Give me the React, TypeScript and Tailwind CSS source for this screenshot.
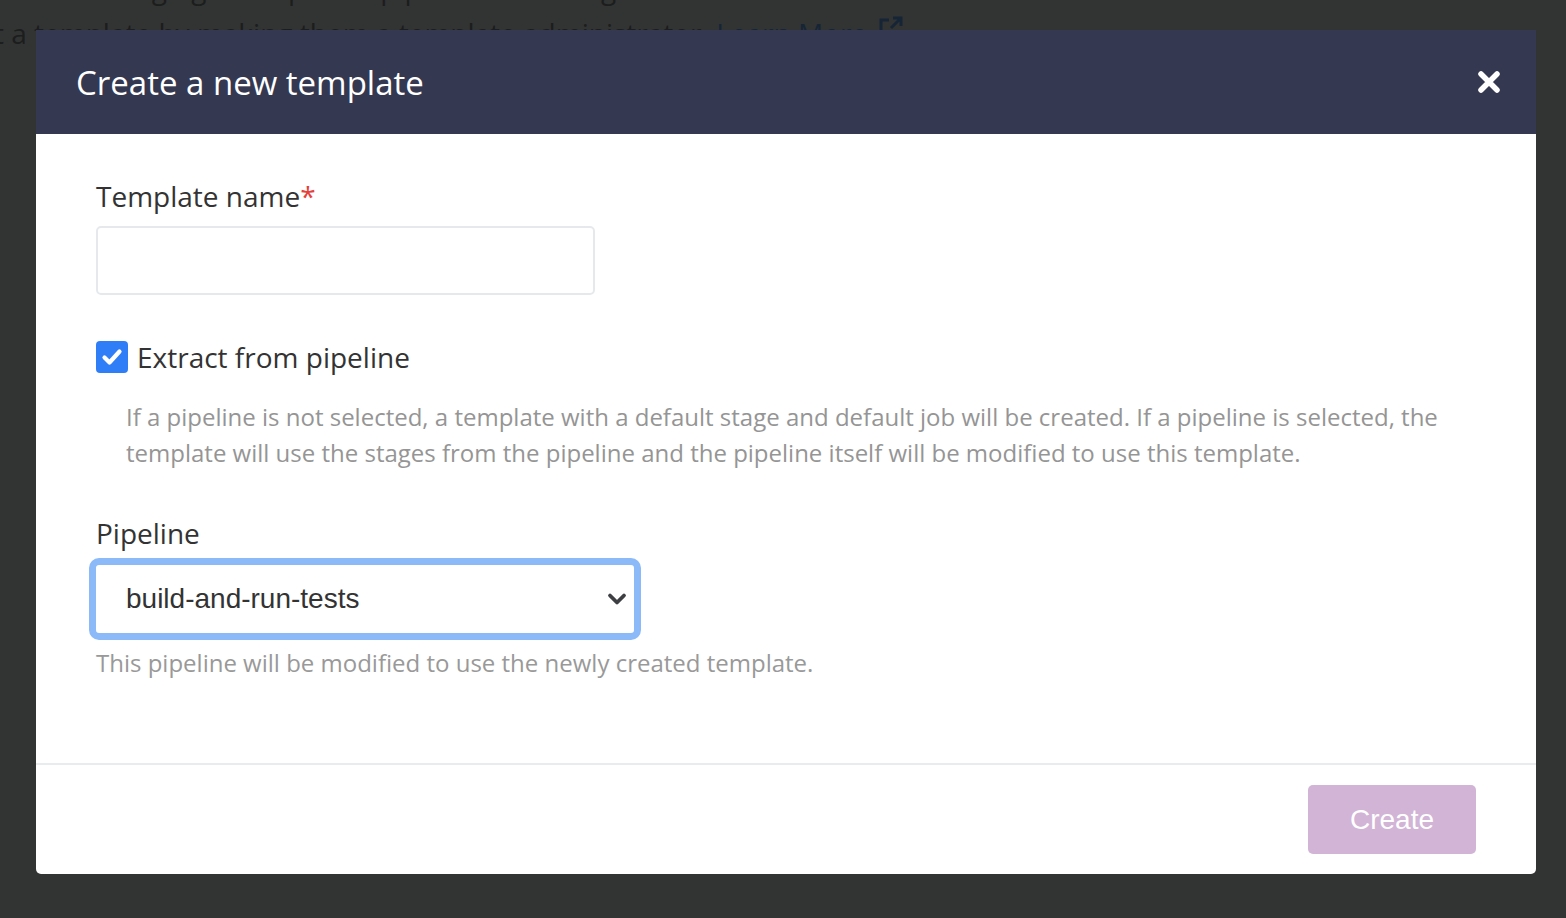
import React from "react";

export default function App() {
  return (
    <div
      className="relative h-[918px] w-[1566px] overflow-hidden bg-[#323433]"
      style={{ fontFamily: '"Open Sans", "Noto Sans", sans-serif' }}
    >
      {/* dimmed page content behind the overlay */}
      <div className="text-[28px] leading-[42px] text-[#1c1d1d]">
        <div className="-mt-[33px] whitespace-nowrap pl-[2px]">
          allow managing a template's pipelines and stages
        </div>
        <div className="mt-[3px] -ml-[6px] flex items-center whitespace-nowrap">
          <span>t a template by making them a template administrator.&nbsp;</span>
          <span className="text-[#152536]">Learn More</span>
          <svg width="28" height="28" viewBox="0 0 28 28" className="ml-[10px] -mt-[10px]">
            <path d="M12 6 H4 V24 H22 V16" fill="none" stroke="#152536" strokeWidth="3" />
            <path d="M14 14 L24 4 M16 4 H24 V12" fill="none" stroke="#152536" strokeWidth="3" />
          </svg>
        </div>
      </div>

      {/* modal */}
      <div className="absolute left-[36px] top-[30px] flex h-[844px] w-[1500px] flex-col overflow-hidden rounded-b-[5px] bg-white">
        <div className="flex h-[104px] shrink-0 items-center justify-between bg-[#343850] pl-[40px] pr-[35px]">
          <h1 className="text-[33px] font-normal leading-none text-white">Create a new template</h1>
          <svg width="24" height="24" viewBox="0 0 24 24" className="block">
            <path d="M4 4 L20 20 M20 4 L4 20" stroke="white" strokeWidth="5.5" strokeLinecap="round" />
          </svg>
        </div>

        <div className="flex-1 px-[60px] pt-[41px]">
          <label className="block text-[28px] leading-[42px] text-[#333]">
            Template name<span className="text-[#e5403a]">*</span>
          </label>
          <div className="mt-[9px] h-[69px] w-[499px] rounded-[5px] border-2 border-[#e6e9ec] bg-white" />

          <div className="mt-[41px] flex h-[42px] items-center">
            <div className="flex h-[32px] w-[32px] items-center justify-center rounded-[4px] bg-[#2f7ef7]">
              <svg width="24" height="24" viewBox="0 0 24 24">
                <path d="M4.5 12.5 L9.5 17.5 L19.5 6.5" fill="none" stroke="white" strokeWidth="4.2" strokeLinecap="round" strokeLinejoin="round" />
              </svg>
            </div>
            <span className="ml-[9px] text-[28px] leading-[42px] text-[#333]">Extract from pipeline</span>
          </div>

          <p className="mt-[21px] pl-[30px] text-[24px] leading-[36px] text-[#959595]">
            If a pipeline is not selected, a template with a default stage and default job will be created. If a pipeline is selected, the template will use the stages from the pipeline and the pipeline itself will be modified to use this template.
          </p>

          <label className="mt-[41px] block text-[28px] leading-[42px] text-[#333]">Pipeline</label>
          <div className="-ml-[7px] mt-[4px] h-[82px] w-[552px] rounded-[10px] border-[7px] border-[#8cbaf8] bg-white">
            <div className="flex h-full items-center justify-between rounded-[3px] pl-[30px] pr-[7px]">
              <span
                className="text-[28px] text-[#333]"
                style={{ fontFamily: '"Liberation Sans", Arial, sans-serif' }}
              >
                build-and-run-tests
              </span>
              <svg width="20" height="14" viewBox="0 0 20 14">
                <path d="M3 3.5 L10 10.5 L17 3.5" fill="none" stroke="#3d3f43" strokeWidth="3.8" strokeLinecap="round" strokeLinejoin="round" />
              </svg>
            </div>
          </div>
          <p className="mt-[5px] text-[24px] leading-[36px] text-[#999]">
            This pipeline will be modified to use the newly created template.
          </p>
        </div>

        <div className="flex h-[111px] shrink-0 items-center justify-end border-t-2 border-[#e9ecef] pr-[60px]">
          <button
            className="h-[69px] w-[168px] rounded-[5px] bg-[#d1b4d6] text-[28px] text-white"
            style={{ fontFamily: '"Liberation Sans", Arial, sans-serif' }}
          >
            Create
          </button>
        </div>
      </div>
    </div>
  );
}
